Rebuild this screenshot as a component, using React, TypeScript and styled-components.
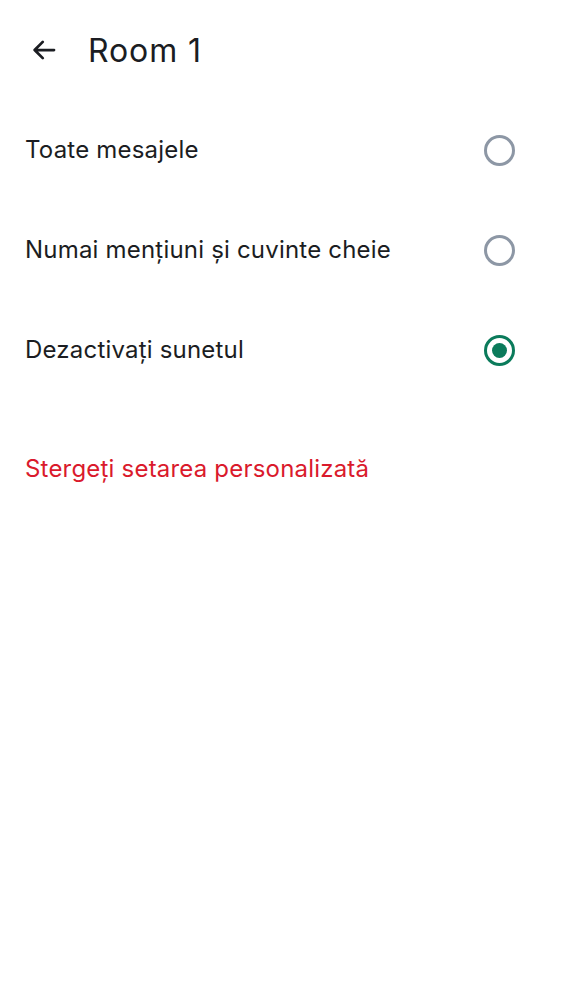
import React, { useState } from "react";
import styled, { createGlobalStyle } from "styled-components";

const Global = createGlobalStyle`
  html, body { margin: 0; padding: 0; background: #ffffff; }
  body { font-family: Inter, "Noto Sans", sans-serif; color: #1b1d22; }
`;

const Page = styled.div`
  width: 562px;
  min-height: 1000px;
  background: #ffffff;
  display: flex;
  flex-direction: column;
`;

const TopBar = styled.header`
  height: 100px;
  display: flex;
  align-items: center;
  padding: 0 0 0 26px;
  gap: 26px;
  box-sizing: border-box;
`;

const BackButton = styled.button`
  width: 36px;
  height: 36px;
  border: none;
  background: none;
  padding: 0;
  display: flex;
  align-items: center;
  justify-content: center;
  color: #1b1d22;
  cursor: pointer;
`;

const Title = styled.h1`
  margin: 0;
  font-size: 32px;
  font-weight: 400;
  letter-spacing: 0.9px;
  color: #1b1d22;
`;

const Options = styled.div`
  display: flex;
  flex-direction: column;
`;

const OptionRow = styled.label`
  height: 100px;
  display: flex;
  align-items: center;
  justify-content: space-between;
  padding: 0 47px 0 25px;
  cursor: pointer;
`;

const OptionText = styled.span`
  font-size: 24px;
  letter-spacing: 0.2px;
  color: #1b1d22;
  margin-top: -1px;
`;

const Radio = styled.span<{ $checked: boolean }>`
  width: 31px;
  height: 31px;
  box-sizing: border-box;
  border-radius: 50%;
  border: 3px solid ${(p) => (p.$checked ? "#0b7b5b" : "#8d97a5")};
  display: flex;
  align-items: center;
  justify-content: center;
  &::after {
    content: "";
    width: 15px;
    height: 15px;
    border-radius: 50%;
    background: #0b7b5b;
    display: ${(p) => (p.$checked ? "block" : "none")};
  }
`;

const ClearLink = styled.button`
  margin-top: 18px;
  height: 100px;
  border: none;
  background: none;
  text-align: left;
  padding: 0 0 0 25px;
  font-family: inherit;
  font-size: 24px;
  letter-spacing: 0.2px;
  color: #da1a2c;
  cursor: pointer;
  align-self: stretch;
`;

const labels = [
  "Toate mesajele",
  "Numai mențiuni și cuvinte cheie",
  "Dezactivați sunetul",
];

export default function App() {
  const [selected, setSelected] = useState(2);
  return (
    <Page>
      <Global />
      <TopBar>
        <BackButton aria-label="Back">
          <svg width="30" height="30" viewBox="0 0 24 24" fill="none">
            <path
              d="M20 12H4.5M11 5.5L4.5 12L11 18.5"
              stroke="currentColor"
              strokeWidth="2.2"
              strokeLinecap="round"
              strokeLinejoin="round"
            />
          </svg>
        </BackButton>
        <Title>Room 1</Title>
      </TopBar>
      <Options>
        {labels.map((l, i) => (
          <OptionRow key={i} onClick={() => setSelected(i)}>
            <OptionText>{l}</OptionText>
            <Radio $checked={selected === i} />
          </OptionRow>
        ))}
      </Options>
      <ClearLink>Stergeți setarea personalizată</ClearLink>
    </Page>
  );
}
